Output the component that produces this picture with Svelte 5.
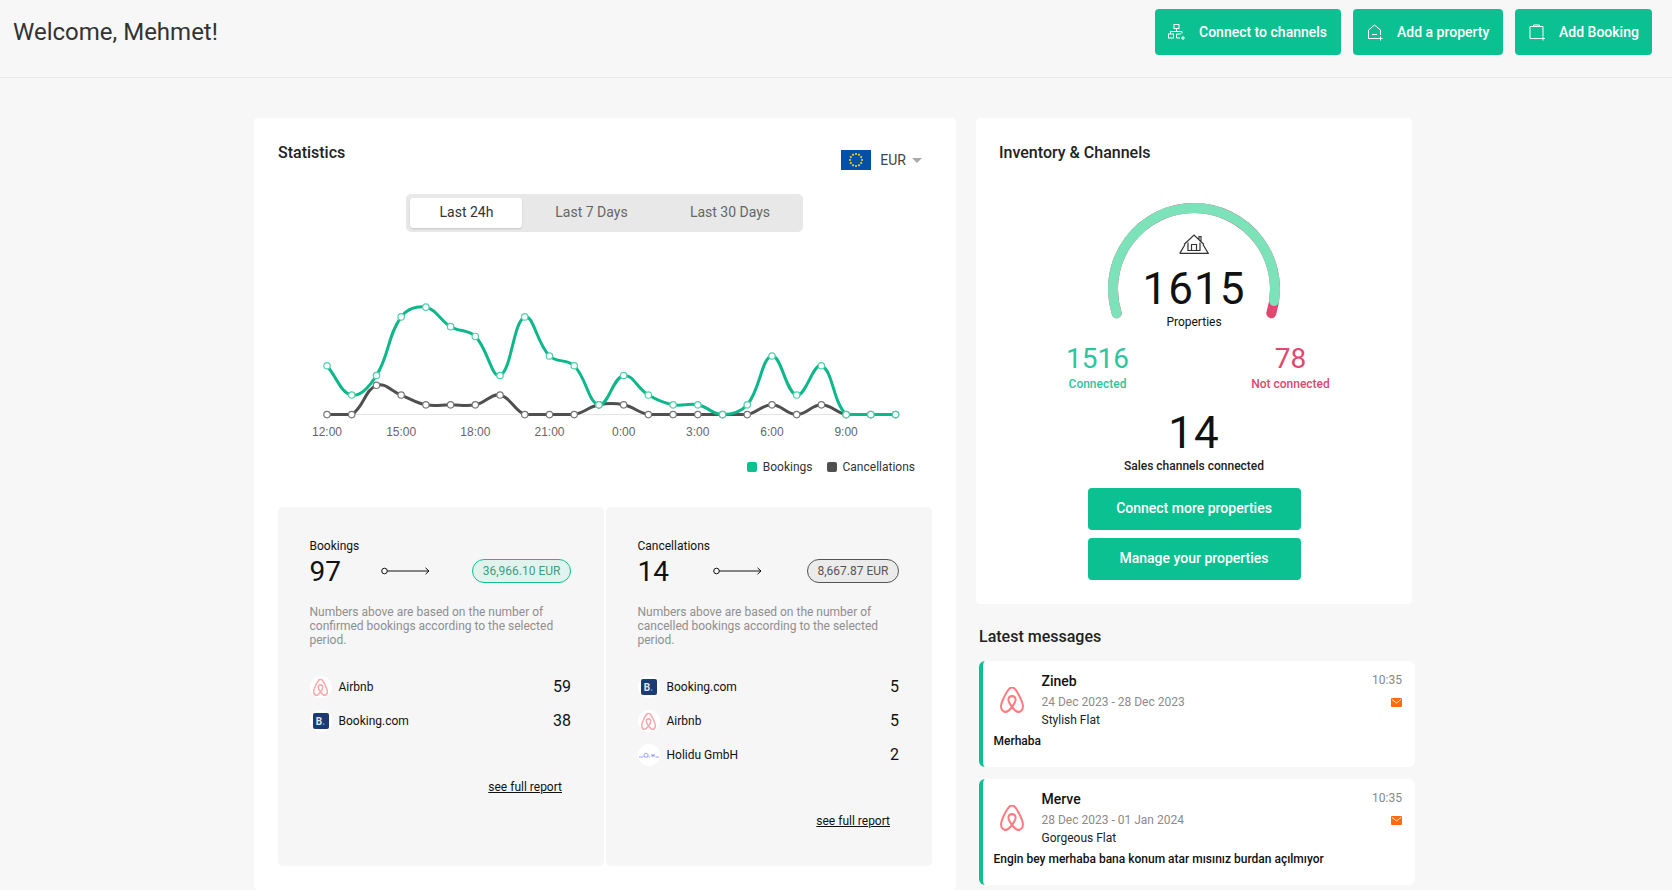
<script>
  const bookings = [5,2,4,10,11,9,8,4,10,6,5,1,4,2,1,1,0,1,6,2,5,0,0,0];
  const cancels = [0,0,3,2,1,1,1,2,0,0,0,1,1,0,0,0,0,0,1,0,1,0,0,0];
  const labels = ['12:00','15:00','18:00','21:00','0:00','3:00','6:00','9:00'];
  const x0 = 49, dx = 24.72, base = 182.6, unit = 9.77;
  const pts = (d) => d.map((v, i) => [x0 + i * dx, base - v * unit]);
  function spline(p) {
    const t = 0.4;
    const cps = p.map((c, i) => {
      const a = p[i - 1] || c, b = p[i + 1] || c;
      const d1 = Math.hypot(c[0] - a[0], c[1] - a[1]);
      const d2 = Math.hypot(b[0] - c[0], b[1] - c[1]);
      const s = d1 + d2 || 1;
      const fa = (t * d1) / s, fb = (t * d2) / s;
      return {
        prev: [c[0] - fa * (b[0] - a[0]), Math.min(base, c[1] - fa * (b[1] - a[1]))],
        next: [c[0] + fb * (b[0] - a[0]), Math.min(base, c[1] + fb * (b[1] - a[1]))]
      };
    });
    let out = `M${p[0][0]} ${p[0][1]}`;
    for (let i = 1; i < p.length; i++) {
      const n = cps[i - 1].next, q = cps[i].prev;
      out += ` C${n[0].toFixed(2)} ${n[1].toFixed(2)} ${q[0].toFixed(2)} ${q[1].toFixed(2)} ${p[i][0].toFixed(2)} ${p[i][1].toFixed(2)}`;
    }
    return out;
  }
  const greenPts = pts(bookings), greyPts = pts(cancels);
  const greenPath = spline(greenPts), greyPath = spline(greyPts);

  const panels = [
    { title: 'Bookings', num: 97, amount: '36,966.10 EUR', kind: 'ok', word: 'confirmed',
      rows: [['airbnb','Airbnb',59],['booking','Booking.com',38]] },
    { title: 'Cancellations', num: 14, amount: '8,667.87 EUR', kind: 'no', word: 'cancelled',
      rows: [['booking','Booking.com',5],['airbnb','Airbnb',5],['holidu','Holidu GmbH',2]] }
  ];
  const messages = [
    { name: 'Zineb', dates: '24 Dec 2023 - 28 Dec 2023', flat: 'Stylish Flat', text: 'Merhaba' },
    { name: 'Merve', dates: '28 Dec 2023 - 01 Jan 2024', flat: 'Gorgeous Flat', text: 'Engin bey merhaba bana konum atar mısınız burdan açılmıyor' }
  ];
  const stars = Array.from({ length: 12 }, (_, i) => [15 + 6 * Math.cos(i * Math.PI / 6), 10 + 6 * Math.sin(i * Math.PI / 6)]);
</script>

{#snippet belo(cls)}
  <svg class={cls} viewBox="1 1 22 21.500" preserveAspectRatio="none" fill="none" stroke-linejoin="round">
    <path d="M12 17.500C9 21 6 22.500 4 21 1.500 19.500 1.500 16.500 3 13 5 8.500 8 4 9.500 2.500 11 1 13 1 14.500 2.500 16 4 19 8.500 21 13 22.500 16.500 22.500 19.500 20 21 18 22.500 15 21 12 17.500ZM12 17.500C9.500 14.500 8.500 12.500 8.700 11 9 9.200 10.500 8.500 12 8.500 13.500 8.500 15 9.200 15.300 11 15.500 12.500 14.500 14.500 12 17.500Z"/>
  </svg>
{/snippet}

<div class="page">
  <header class="top">
    <h1>Welcome, Mehmet!</h1>
    <div class="actions">
      <button class="act a1">
        <svg viewBox="0 0 20 20" fill="none" stroke="#fff" stroke-width="1"><rect x="7" y="2.500" width="5" height="4"/><path d="M9.500 6.500V9.500M3.500 12V9.500H15V11.500"/><rect x="1.500" y="12" width="5" height="4"/><path d="M14 12H9.500V16H13M16 14V18M14 16H18"/></svg>
        Connect to channels
      </button>
      <button class="act a2">
        <svg viewBox="0 0 20 20" fill="none" stroke="#fff" stroke-width="1"><path d="M14 16.500H3.500V8L9.500 3 15.500 8V13"/><path d="M7 12.500H12M15.500 14.500V18.500M13.500 16.500H17.500"/></svg>
        Add a property
      </button>
      <button class="act a3">
        <svg viewBox="0 0 20 20" fill="none" stroke="#fff" stroke-width="1"><path d="M14 16.500H3V4.500H16V14"/><path d="M6.500 4.500V3H12.500V4.500M16 14.500V18.500M14 16.500H18"/></svg>
        Add Booking
      </button>
    </div>
  </header>

  <main class="main">
    <section class="stats">
      <div class="stats-head">
        <h2>Statistics</h2>
        <div class="currency">
          <svg class="flag" viewBox="0 0 30 20"><rect width="30" height="20" fill="#0350a8"/>{#each stars as s}<circle cx={s[0]} cy={s[1]} r="1" fill="#ffe01a"/>{/each}</svg>
          <span>EUR</span>
          <i class="caret"></i>
        </div>
      </div>
      <div class="tabs-wrap">
        <div class="tabs">
          <div class="tab on">Last 24h</div>
          <div class="tab">Last 7 Days</div>
          <div class="tab">Last 30 Days</div>
        </div>
      </div>

      <svg class="chart" viewBox="0 0 654 213" width="654" height="213">
        <line x1={x0} x2={x0 + 23 * dx} y1={base} y2={base} stroke="#e2e2e2" />
        {#each labels as l, i}
          <text x={x0 + i * 3 * dx} y="204" text-anchor="middle">{l}</text>
        {/each}
        <path d={greyPath} fill="none" stroke="#4f4f4f" stroke-width="3" />
        {#each greyPts as p}<circle cx={p[0]} cy={p[1]} r="3.200" fill="#fff" stroke="#777" stroke-width="1.200" />{/each}
        <path d={greenPath} fill="none" stroke="#0cb88a" stroke-width="3" />
        {#each greenPts as p}<circle cx={p[0]} cy={p[1]} r="3.200" fill="#fff" stroke="#4fd0ac" stroke-width="1.200" />{/each}
      </svg>

      <div class="legend">
        <span class="lg"><i class="sw green"></i>Bookings</span>
        <span class="lg"><i class="sw grey"></i>Cancellations</span>
      </div>

      <div class="panels">
        {#each panels as p}
          <article class="panel">
            <div class="p-title">{p.title}</div>
            <div class="p-row">
              <span class="p-num">{p.num}</span>
              <svg class="arrow" viewBox="0 0 49 8" width="49" height="8" fill="none" stroke="#111" stroke-width="1"><circle cx="3.500" cy="4" r="2.800"/><path d="M6.300 4H48M44.500 .8 48 4 44.500 7.200"/></svg>
              <span class="pill {p.kind}">{p.amount}</span>
            </div>
            <p class="note">Numbers above are based on the number of {p.word} bookings according to the selected period.</p>
            <div class="chan">
              {#each p.rows as r}
                <div class="chan-row">
                  <span class="logo">
                    {#if r[0] === 'airbnb'}
                      {@render belo('belo soft')}
                    {:else if r[0] === 'booking'}
                      <span class="bk">B<em>.</em></span>
                    {:else}
                      <svg class="hol" viewBox="0 0 22 8" fill="none" stroke="#6f78e8" stroke-width=".7"><path d="M1 6H5M6 6V3.500L8 2 10 3.500V6H6M11 6H12M14 3V6M14 4.500H16M16 3V6M17.500 6H21"/></svg>
                    {/if}
                  </span>
                  <span class="chan-name">{r[1]}</span>
                  <span class="chan-num">{r[2]}</span>
                </div>
              {/each}
            </div>
            <div class="report"><a href="#report">see full report</a></div>
          </article>
        {/each}
      </div>
    </section>

    <div class="side">
      <section class="inv">
        <h2>Inventory &amp; Channels</h2>
        <div class="gauge">
          <svg class="arc" viewBox="0 0 172 126" width="172" height="126" fill="none" stroke-width="10" stroke-linecap="round">
            <path d="M8.700 110.300A81 81 0 1 1 163.300 110.300" stroke="#e0486f" />
            <path d="M8.700 110.300A81 81 0 1 1 166.100 98" stroke="#7be2b9" />
          </svg>
          <div class="g-inner">
            <svg class="house" viewBox="0 0 30 21" width="30" height="21" fill="none" stroke="#333" stroke-width="1.200"><path d="M.8 20.400H29.200L24 11.500M.8 20.400 6 11.500"/><path d="M5 11.500 15 2 25 11.500M20 7V3.500H22V9"/><path d="M9 9.500V17.500H21V9.500M12.500 17.500V11.500H17.500V17.500"/></svg>
            <div class="g-num">1615</div>
            <div class="g-label">Properties</div>
          </div>
        </div>
        <div class="split">
          <div class="col c-ok"><div class="col-num">1516</div><div class="col-lab">Connected</div></div>
          <div class="col c-no"><div class="col-num">78</div><div class="col-lab">Not connected</div></div>
        </div>
        <div class="g-num sales">14</div>
        <div class="sales-lab">Sales channels connected</div>
        <button class="big first">Connect more properties</button>
        <button class="big">Manage your properties</button>
      </section>

      <section class="msgs">
        <h2>Latest messages</h2>
        {#each messages as m}
          <article class="msg">
            <div class="m-top">
              {@render belo('belo')}
              <div class="m-body">
                <div class="m-name">{m.name}</div>
                <div class="m-dates">{m.dates}</div>
                <div class="m-flat">{m.flat}</div>
              </div>
              <div class="m-meta">
                <div class="m-time">10:35</div>
                <svg class="mail" viewBox="0 0 11 9" width="11" height="9"><rect width="11" height="9" rx="1" fill="#ff6a13"/><path d="M1 1.500 5.500 5 10 1.500" fill="none" stroke="#fff" stroke-width=".9"/></svg>
              </div>
            </div>
            <div class="m-text">{m.text}</div>
          </article>
        {/each}
      </section>
    </div>
  </main>
</div>

<style>
  :global(html), :global(body) { margin: 0; background: #f7f7f7; }
  .page { height: 890px; overflow: hidden; font-family: Roboto, "Liberation Sans", sans-serif; color: #111; background: #f7f7f7; }
  h1, h2, p { margin: 0; }
  button { font-family: inherit; border: 0; cursor: pointer; }

  .top { height: 64px; padding: 0 20px 13px 13px; border-bottom: 1px solid #e8e8e8; display: flex; align-items: center; justify-content: space-between; }
  h1 { font-size: 24px; font-weight: 400; color: #333; }
  .actions { display: flex; gap: 12px; }
  .act { height: 46px; display: flex; align-items: center; background: #0cc191; color: #fff; font-size: 14px; font-weight: 500; border-radius: 4px; padding: 0 0 1px; }
  .act svg { width: 20px; height: 20px; flex: none; margin-right: 12px; }
  .a1 { width: 186px; padding-left: 12px; }
  .a2 { width: 150px; padding-left: 12px; }
  .a3 { width: 137px; padding-left: 12px; }

  .main { display: flex; align-items: flex-start; gap: 20px; padding: 40px 0 0 254px; }
  .stats { width: 702px; box-sizing: border-box; background: #fff; padding: 25px 24px 24px; border-radius: 4px; flex: none; }
  .stats-head { display: flex; justify-content: space-between; align-items: flex-start; }
  h2 { font-size: 16px; line-height: 20px; font-weight: 500; color: #222; }
  .currency { margin-top: 7px; display: flex; align-items: center; font-size: 14px; color: #444; padding-right: 10px; }
  .flag { width: 30px; height: 20px; margin-right: 9px; }
  .caret { width: 0; height: 0; border-left: 5px solid transparent; border-right: 5px solid transparent; border-top: 5px solid #aaa; margin-left: 6px; }
  .tabs-wrap { margin-top: 24px; display: flex; justify-content: center; padding-right: 2px; }
  .tabs { display: grid; grid-template-columns: 112px 138px 139px; height: 38px; box-sizing: border-box; padding: 4px; background: #e8e8e8; border-radius: 5px; }
  .tab { display: flex; align-items: center; justify-content: center; font-size: 14px; color: #666; border-radius: 3px; padding: 0 0 2px 2px; box-sizing: border-box; }
  .tab.on { background: #fff; color: #333; box-shadow: 0 1px 2px rgba(0,0,0,.15); }

  .chart { display: block; }
  .chart text { font-family: "Liberation Sans", Arial, sans-serif; font-size: 12px; fill: #666; }
  .legend { margin-top: 15px; display: flex; justify-content: flex-end; gap: 14px; padding-right: 17px; height: 14px; font-size: 12px; line-height: 14px; color: #333; }
  .lg { display: flex; align-items: center; }
  .sw { width: 10px; height: 10px; border-radius: 2px; margin-right: 6px; }
  .green { background: #0cc191; }
  .grey { background: #505050; }

  .panels { margin-top: 33px; display: grid; grid-template-columns: 326px 326px; gap: 2px; }
  .panel { height: 359px; box-sizing: border-box; background: #f6f6f6; border-radius: 5px; padding: 32px 33px 0 31.500px; }
  .p-title { font-size: 12px; line-height: 14px; color: #111; }
  .p-row { margin-top: 6px; height: 24px; display: flex; align-items: center; justify-content: space-between; }
  .p-num { font-size: 28px; color: #111; }
  .arrow { margin-right: 2px; }
  .pill { height: 24px; box-sizing: border-box; display: flex; align-items: center; padding: 0 9.500px; font-size: 12px; border-radius: 12px; }
  .pill.ok { background: #e0f3ec; border: 1px solid #12bf90; color: #3c9e86; }
  .pill.no { background: #ebebeb; border: 1px solid #555; color: #555; }
  .note { margin-top: 22px; font-size: 12px; line-height: 14px; color: #8f8f8f; }
  .chan { margin-top: 29px; display: flex; flex-direction: column; gap: 12px; }
  .chan-row { display: flex; align-items: center; height: 22px; font-size: 12px; color: #111; }
  .logo { width: 22px; height: 22px; border-radius: 50%; background: #fff; display: flex; align-items: center; justify-content: center; margin-right: 7px; flex: none; }
  .belo { width: 24px; height: 26px; stroke: #ff7b80; stroke-width: 1.800; flex: none; }
  .belo.soft { width: 15px; height: 17px; stroke: #ffa9ac; stroke-width: 2.200; }
  .bk { width: 16px; height: 16px; border-radius: 2px; background: #1e3a72; color: #dfe6f3; font-size: 10px; font-weight: 700; display: flex; align-items: center; justify-content: center; }
  .bk em { color: #27aef0; font-style: normal; }
  .hol { width: 22px; height: 8px; }
  .chan-name { flex: 1; }
  .chan-num { font-size: 16px; padding-bottom: 2px; }
  .report { margin-top: 48px; padding-right: 9px; display: flex; justify-content: flex-end; font-size: 12px; line-height: 14px; }
  .report a { color: #111; text-decoration: underline; }

  .side { width: 436px; flex: none; }
  .inv { background: #fff; border-radius: 4px; box-sizing: border-box; height: 486px; padding: 25px 23px 0; display: flex; flex-direction: column; align-items: center; }
  .inv h2 { align-self: flex-start; }
  .gauge { position: relative; margin-top: 40px; width: 172px; height: 126px; }
  .arc { display: block; }
  .g-inner { position: absolute; top: 30px; left: 0; right: 0; display: flex; flex-direction: column; align-items: center; }
  .g-num { font-size: 44px; line-height: 44px; letter-spacing: 1px; color: #111; }
  .g-inner .g-num { margin-top: 13px; }
  .g-label { margin-top: 4px; font-size: 12px; line-height: 14px; color: #111; }
  .split { margin-top: 14px; display: flex; }
  .col { width: 193px; text-align: center; }
  .col-num { font-size: 28px; line-height: 32px; }
  .col-lab { margin-top: 2px; font-size: 12px; line-height: 14px; font-weight: 500; }
  .c-ok { color: #2cc5a0; }
  .c-no { color: #e0486f; }
  .sales { margin-top: 20px; }
  .sales-lab { margin-top: 4px; font-size: 12px; line-height: 14px; font-weight: 500; color: #222; }
  .big { width: 213px; height: 42px; margin-top: 8px; padding-bottom: 3px; background: #0cc191; color: #fff; font-size: 14px; font-weight: 500; border-radius: 4px; }
  .big.first { margin-top: 15px; }

  .msgs { margin-left: 3px; width: 436px; }
  .msgs h2 { margin-top: 23px; margin-bottom: 14px; }
  .msg { height: 106px; box-sizing: border-box; margin-bottom: 12px; background: #fff; border-left: 4px solid #0cc191; border-radius: 6px; padding: 11px 13px 0 10.500px; }
  .m-top { display: flex; align-items: center; }
  .m-top .belo { margin-left: 6px; }
  .m-body { margin-left: 18px; flex: 1; }
  .m-name { font-size: 14px; line-height: 18px; font-weight: 500; color: #111; }
  .m-dates { margin-top: 5px; font-size: 12px; line-height: 14px; color: #8b8b8b; }
  .m-flat { margin-top: 4px; font-size: 12px; line-height: 14px; color: #222; }
  .m-meta { align-self: flex-start; display: flex; flex-direction: column; align-items: flex-end; margin-top: 1px; }
  .m-time { font-size: 12px; line-height: 14px; color: #888; }
  .mail { margin-top: 11px; }
  .m-text { margin-top: 7px; font-size: 12px; line-height: 14px; font-weight: 500; color: #111; }
</style>
